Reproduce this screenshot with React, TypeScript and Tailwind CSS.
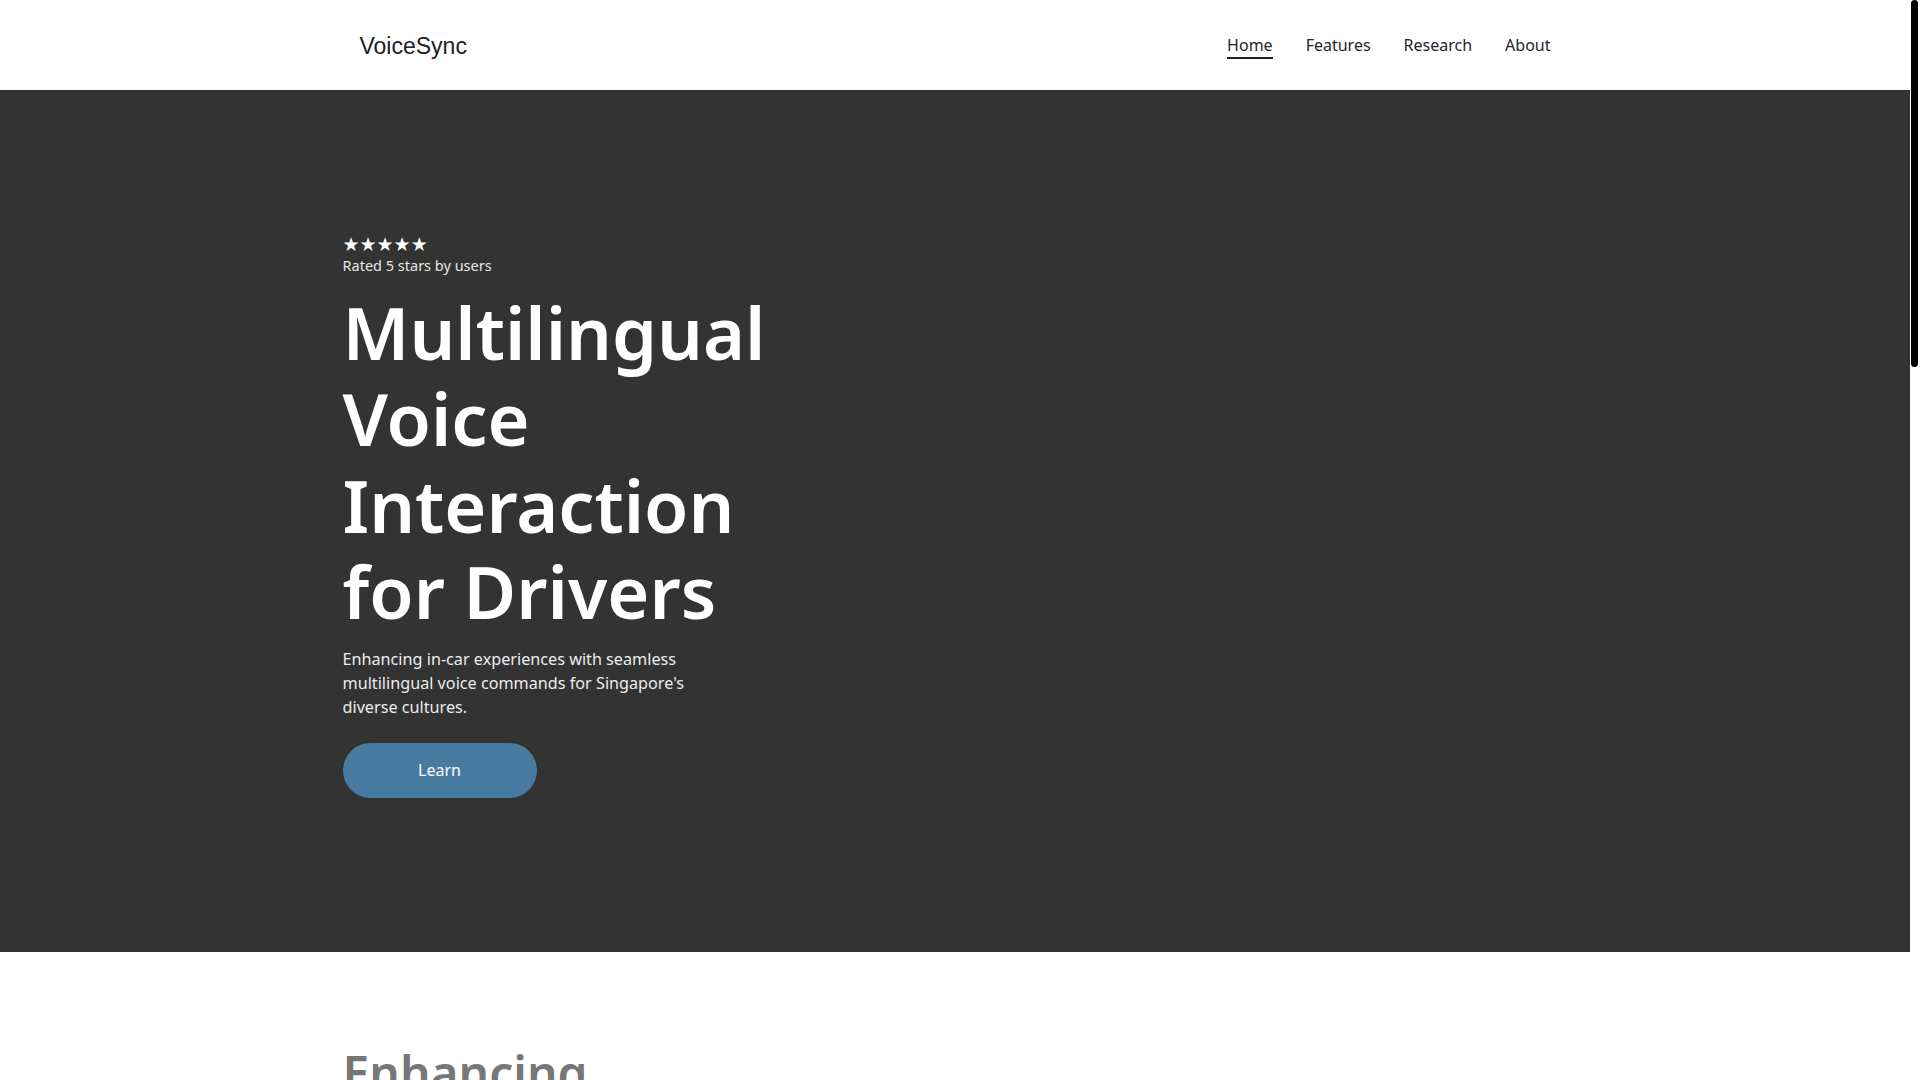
import React from 'react';

const NAV = ['Home', 'Features', 'Research', 'About'];

const FEATURES = [
  { title: 'Four official languages', text: 'English, Mandarin, Malay and Tamil commands understood in a single conversation.' },
  { title: 'Code-switching aware', text: 'Drivers can mix languages mid-sentence the way Singaporeans naturally speak.' },
  { title: 'Hands-free safety', text: 'Keep eyes on the road while controlling navigation, music and calls.' },
];

function Header() {
  return (
    <header className="bg-white h-[90px]">
      <div className="max-w-[1225px] mx-auto h-full px-[17px] flex items-center justify-between">
        <a href="#" className="font-['Liberation_Sans',Arial,sans-serif] text-[23px] leading-none pt-[2px] text-[#1d2126]">
          VoiceSync
        </a>
        <nav className="flex items-center gap-[33px] text-[16px] leading-6 text-[#22262b]">
          {NAV.map((item, i) => (
            <a key={item} href="#" className="relative">
              {item}
              {i === 0 && <span className="absolute left-0 right-0 -bottom-[2px] h-[2px] bg-[#1d2126]" />}
            </a>
          ))}
        </nav>
      </div>
    </header>
  );
}

function Hero() {
  return (
    <section className="bg-[#333333] h-[862px] pt-[144px]">
      <div className="max-w-[1225px] w-full mx-auto">
        <div className="font-['DejaVu_Sans',sans-serif] text-[19px] leading-5 text-white">★★★★★</div>
        <p className="mt-px text-[14.5px] leading-5 text-[#e6e6e6]">Rated 5 stars by users</p>
        <h1 className="mt-[14px] max-w-[480px] text-[72px] leading-[1.2] font-semibold text-white">
          Multilingual Voice Interaction for Drivers
        </h1>
        <p className="mt-3 max-w-[370px] text-[16.2px] leading-6 text-[#ececec]">
          Enhancing in-car experiences with seamless multilingual voice commands for Singapore's diverse cultures.
        </p>
        <button className="mt-6 w-[194px] h-[55px] rounded-full bg-[#477ca0] text-white text-[16px]">
          Learn
        </button>
      </div>
    </section>
  );
}

function Features() {
  return (
    <section className="bg-white pt-[92px] pb-32">
      <div className="max-w-[1225px] mx-auto">
        <h2 className="max-w-[300px] text-[48px] leading-[1.2] font-semibold text-[#777777]">
          Enhancing Every Journey
        </h2>
        <p className="mt-6 max-w-[560px] text-[16px] leading-6 text-[#555]">
          VoiceSync brings natural, multilingual voice control to the car, designed around the way people in Singapore really talk.
        </p>
        <div className="mt-16 grid grid-cols-3 gap-8">
          {FEATURES.map((f) => (
            <div key={f.title} className="rounded-2xl border border-gray-200 p-8">
              <h3 className="text-[20px] font-semibold text-[#333]">{f.title}</h3>
              <p className="mt-3 text-[16px] leading-6 text-[#555]">{f.text}</p>
            </div>
          ))}
        </div>
      </div>
    </section>
  );
}

function Research() {
  return (
    <section className="bg-[#f5f5f5] py-32">
      <div className="max-w-[1225px] mx-auto">
        <h2 className="text-[48px] leading-[1.2] font-semibold text-[#333]">Research</h2>
        <p className="mt-6 max-w-[640px] text-[16px] leading-7 text-[#555]">
          Our studies with drivers across Singapore explore how multilingual speech interfaces reduce distraction and improve trust in in-car assistants.
        </p>
      </div>
    </section>
  );
}

function Footer() {
  return (
    <footer className="bg-[#333333] py-20">
      <div className="max-w-[1225px] mx-auto text-[14px] text-[#ccc]">© VoiceSync</div>
    </footer>
  );
}

export default function App() {
  return (
    <div className="bg-white font-['Noto_Sans',sans-serif]">
      <div className="mr-[10px] min-h-[3180px]">
        <Header />
        <Hero />
        <Features />
        <Research />
        <Footer />
      </div>
      {/* page scrollbar thumb as seen in the capture */}
      <div className="fixed right-[2px] top-0 w-[7px] h-[367px] rounded-full bg-black" />
    </div>
  );
}
